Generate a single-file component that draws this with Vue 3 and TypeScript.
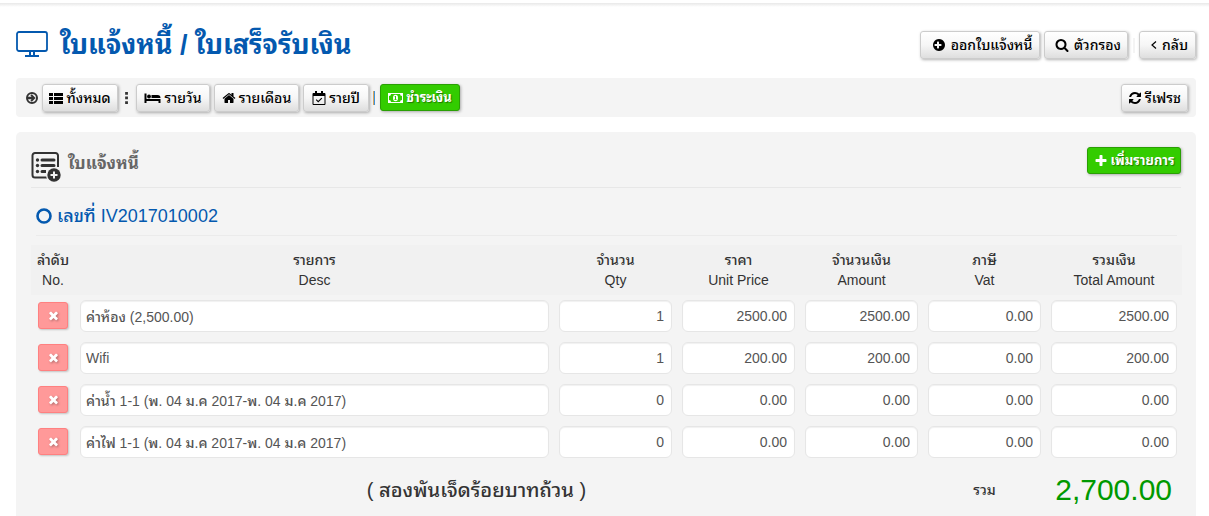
<script setup lang="ts">
import { ref } from 'vue'

interface InvoiceLine {
  desc: string
  qty: string
  price: string
  amount: string
  vat: string
  total: string
}

interface Column {
  key: string
  th: string
  en: string
}

const columns: Column[] = [
  { key: 'no', th: 'ลำดับ', en: 'No.' },
  { key: 'desc', th: 'รายการ', en: 'Desc' },
  { key: 'qty', th: 'จำนวน', en: 'Qty' },
  { key: 'price', th: 'ราคา', en: 'Unit Price' },
  { key: 'amount', th: 'จำนวนเงิน', en: 'Amount' },
  { key: 'vat', th: 'ภาษี', en: 'Vat' },
  { key: 'total', th: 'รวมเงิน', en: 'Total Amount' },
]

const numeric = ['qty', 'price', 'amount', 'vat', 'total'] as const

const lines = ref<InvoiceLine[]>([
  { desc: 'ค่าห้อง (2,500.00)', qty: '1', price: '2500.00', amount: '2500.00', vat: '0.00', total: '2500.00' },
  { desc: 'Wifi', qty: '1', price: '200.00', amount: '200.00', vat: '0.00', total: '200.00' },
  { desc: 'ค่าน้ำ 1-1 (พ. 04 ม.ค 2017-พ. 04 ม.ค 2017)', qty: '0', price: '0.00', amount: '0.00', vat: '0.00', total: '0.00' },
  { desc: 'ค่าไฟ 1-1 (พ. 04 ม.ค 2017-พ. 04 ม.ค 2017)', qty: '0', price: '0.00', amount: '0.00', vat: '0.00', total: '0.00' },
])

function addLine() {
  lines.value.push({ desc: '', qty: '0', price: '0.00', amount: '0.00', vat: '0.00', total: '0.00' })
}

function removeLine(index: number) {
  lines.value.splice(index, 1)
}
</script>

<template>
  <div class="page">
    <header class="head">
      <h1 class="title">
        <svg class="screen" viewBox="0 0 32 27" aria-hidden="true">
          <rect x="1" y="1" width="30" height="19" rx="2" fill="none" stroke="currentColor" stroke-width="1.800" />
          <path d="M13 20h6v4h-6zM9 24h14v2H9z" fill="currentColor" />
          <path d="M15 21h2v3h-2z" fill="#fff" />
        </svg>
        <span>ใบแจ้งหนี้ / ใบเสร็จรับเงิน</span>
      </h1>
      <div class="actions">
        <button type="button" class="btn wide issue">
          <svg class="ico" viewBox="0 0 1792 1792" aria-hidden="true"><path d="M1216 960v-128q0-26-19-45t-45-19h-256v-256q0-26-19-45t-45-19h-128q-26 0-45 19t-19 45v256h-256q-26 0-45 19t-19 45v128q0 26 19 45t45 19h256v256q0 26 19 45t45 19h128q26 0 45-19t19-45v-256h256q26 0 45-19t19-45zm448-64q0 209-103 385.500t-279.500 279.500-385.500 103-385.500-103-279.500-279.500-103-385.500 103-385.500 279.500-279.500 385.500-103 385.500 103 279.500 279.500 103 385.500z" /></svg>
          ออกใบแจ้งหนี้
        </button>
        <button type="button" class="btn wide filter">
          <svg class="ico" viewBox="0 0 1792 1792" aria-hidden="true"><path d="M1216 832q0-185-131.500-316.500t-316.500-131.500-316.500 131.500-131.500 316.500 131.500 316.500 316.500 131.500 316.500-131.500 131.500-316.500zm512 832q0 52-38 90t-90 38q-54 0-90-38l-343-342q-179 124-399 124-143 0-273.500-55.500t-225-150-150-225-55.500-273.500 55.500-273.500 150-225 225-150 273.500-55.500 273.500 55.500 225 150 150 225 55.500 273.500q0 220-124 399l343 343q37 37 37 90z" /></svg>
          ตัวกรอง
        </button>
        <span class="divider"></span>
        <button type="button" class="btn wide back">
          <svg class="chev" viewBox="0 0 6 10" aria-hidden="true"><path d="M5 1.500L1 5l4 3.500" fill="none" stroke="currentColor" stroke-width="1.200" /></svg>
          กลับ
        </button>
      </div>
    </header>

    <nav class="toolbar">
      <svg class="ico arrow" viewBox="0 0 14 14" aria-hidden="true">
        <circle cx="7" cy="7" r="5" fill="none" stroke="currentColor" stroke-width="2" />
        <path d="M3 5.800h3.600L5.400 4.600 6.800 3.200 10.600 7l-3.800 3.800-1.400-1.400L6.600 8.200H3z" />
      </svg>
      <button type="button" class="btn all">
        <svg class="ico" viewBox="0 0 14 14" aria-hidden="true"><path d="M0 2h4v3H0zM5 2h9v3H5zM0 6h4v3H0zM5 6h9v3H5zM0 10h4v3H0zM5 10h9v3H5z" /></svg>
        ทั้งหมด
      </button>
      <svg class="dots" viewBox="0 0 4 14" aria-hidden="true"><path d="M0 1h3v3H0zM0 6h3v3H0zM0 11h3v3H0z" /></svg>
      <button type="button" class="btn day">
        <svg class="ico bed" viewBox="0 0 16 14" aria-hidden="true"><path d="M0 2.500h2V8h14v4h-2v-2H2v2H0zM7 4h6c2 0 3 1.200 3 3H7z" /><circle cx="4.500" cy="5.500" r="1.900" /></svg>
        รายวัน
      </button>
      <button type="button" class="btn month">
        <svg class="ico" viewBox="0 0 1792 1792" aria-hidden="true"><path d="M1472 992v480q0 26-19 45t-45 19h-384v-384h-256v384h-384q-26 0-45-19t-19-45v-480q0-1 .5-3t.5-3l575-474 575 474q1 2 1 6zm223-69l-62 74q-8 9-21 11h-3q-13 0-21-7l-692-577-692 577q-12 8-24 7-13-2-21-11l-62-74q-8-10-7-23.500t11-21.500l719-599q32-26 76-26t76 26l244 204v-195q0-14 9-23t23-9h192q14 0 23 9t9 23v408l219 182q10 8 11 21.500t-7 23.500z" /></svg>
        รายเดือน
      </button>
      <button type="button" class="btn year">
        <svg class="ico" viewBox="0 0 14 14" aria-hidden="true"><path d="M1.500 2h11c.5 0 1 .5 1 1v10c0 .5-.5 1-1 1h-11c-.5 0-1-.5-1-1V3c0-.5.5-1 1-1zm0 3v8h11V5z" fill-rule="evenodd" /><path d="M3 0h2v4H3zM9 0h2v4H9z" /><path d="M4.200 8.700l2 2 3.600-3.600" fill="none" stroke="currentColor" stroke-width="1.100" /></svg>
        รายปี
      </button>
      <span class="pipe"></span>
      <button type="button" class="btn green pay">
        <svg class="ico money" viewBox="0 0 15 10" aria-hidden="true"><path d="M0 0h15v10H0zM3 1A2 2 0 0 1 1 3v4a2 2 0 0 1 2 2h9a2 2 0 0 1 2-2V3a2 2 0 0 1-2-2z" fill-rule="evenodd" /><ellipse cx="7.500" cy="5" rx="2.500" ry="3.200" /><path d="M7 3h1v3.200h.6V7H6.400v-.8H7V4h-.6z" fill="#33cc00" /></svg>
        ชำระเงิน
      </button>
      <button type="button" class="btn refresh">
        <svg class="ico" viewBox="0 0 1792 1792" aria-hidden="true"><path d="M1639 1056q0 5-1 7-64 268-268 434.500t-478 166.500q-146 0-282.500-55t-243.500-157l-129 129q-19 19-45 19t-45-19-19-45v-448q0-26 19-45t45-19h448q26 0 45 19t19 45-19 45l-137 137q71 66 161 102t187 36q134 0 250-65t186-179q11-17 53-117 8-23 30-23h192q13 0 22.500 9.500t9.500 22.500zm25-800v448q0 26-19 45t-45 19h-448q-26 0-45-19t-19-45 19-45l138-138q-148-137-349-137-134 0-250 65t-186 179q-11 17-53 117-8 23-30 23h-199q-13 0-22.500-9.500t-9.500-22.500v-7q65-268 270-434.500t480-166.500q146 0 284 55.500t245 156.500l130-129q19-19 45-19t45 19 19 45z" /></svg>
        รีเฟรช
      </button>
    </nav>

    <main class="panel">
      <div class="panel-head">
        <svg class="form-ico" viewBox="0 0 30 30" aria-hidden="true">
          <path d="M17 25.500H4A2.500 2.500 0 0 1 1.500 23V3.500A2.500 2.500 0 0 1 4 1h20.500A2.500 2.500 0 0 1 27 3.500V15" fill="none" stroke="currentColor" stroke-width="2" />
          <path d="M11 6.500h12a1.500 1.500 0 0 1 0 3H11a1.500 1.500 0 0 1 0-3zM11 12h12a1.500 1.500 0 0 1 0 3H11a1.500 1.500 0 0 1 0-3zM11 18h4v3h-4a1.500 1.500 0 0 1 0-3z" />
          <circle cx="6.500" cy="8" r="1.700" /><circle cx="6.500" cy="13.500" r="1.700" /><circle cx="6.500" cy="19.500" r="1.700" />
          <circle cx="23" cy="23" r="8" fill="#f4f4f4" />
          <circle cx="23" cy="23" r="6.700" />
          <path d="M22 19.500h2V22h2.500v2H24v2.500h-2V24h-2.500v-2H22z" fill="#f4f4f4" />
        </svg>
        <h2>ใบแจ้งหนี้</h2>
        <button type="button" class="btn green add" @click="addLine">
          <svg class="ico" viewBox="0 0 1792 1792" aria-hidden="true"><path d="M1600 736v192q0 40-28 68t-68 28h-416v416q0 40-28 68t-68 28h-192q-40 0-68-28t-28-68v-416h-416q-40 0-68-28t-28-68v-192q0-40 28-68t68-28h416v-416q0-40 28-68t68-28h192q40 0 68 28t28 68v416h416q40 0 68 28t28 68z" /></svg>
          เพิ่มรายการ
        </button>
      </div>

      <h3 class="number">
        <svg class="ring" viewBox="0 0 16 16" aria-hidden="true"><circle cx="8" cy="8" r="6.500" fill="none" stroke="currentColor" stroke-width="2.600" /></svg>
        <span>เลขที่ IV2017010002</span>
      </h3>

      <table class="lines">
        <colgroup>
          <col v-for="c in columns" :key="c.key" :class="'col-' + c.key" />
        </colgroup>
        <thead>
          <tr>
            <th v-for="c in columns" :key="c.key" scope="col">{{ c.th }}<br />{{ c.en }}</th>
          </tr>
        </thead>
        <tbody>
          <tr v-for="(line, i) in lines" :key="i">
            <td class="del-cell">
              <button type="button" class="del" aria-label="ลบ" @click="removeLine(i)">
                <svg viewBox="0 0 1792 1792" aria-hidden="true"><path d="M1490 1322q0 40-28 68l-136 136q-28 28-68 28t-68-28l-294-294-294 294q-28 28-68 28t-68-28l-136-136q-28-28-28-68t28-68l294-294-294-294q-28-28-28-68t28-68l136-136q28-28 68-28t68 28l294 294 294-294q28-28 68-28t68 28l136 136q28 28 28 68t-28 68l-294 294 294 294q28 28 28 68z" /></svg>
              </button>
            </td>
            <td><input v-model="line.desc" type="text" aria-label="รายการ" /></td>
            <td v-for="k in numeric" :key="k">
              <input v-model="line[k]" type="text" class="num" :aria-label="k" />
            </td>
          </tr>
        </tbody>
        <tfoot>
          <tr>
            <td></td>
            <td colspan="4" class="words">( สองพันเจ็ดร้อยบาทถ้วน )</td>
            <td class="sum-label">รวม</td>
            <td class="sum">2,700.00</td>
          </tr>
        </tfoot>
      </table>
    </main>
  </div>
</template>

<style>
body {
  margin: 0;
  background: #fff;
}
</style>

<style scoped>
.page {
  padding: 3px 13px 0 16px;
  background: linear-gradient(#fff 3px, #e8e8e8 3px, #fff 7px) no-repeat;
  font-family: "Liberation Sans", "Noto Sans Thai Looped", "Noto Looped Thai", Loma, Garuda, Arial, sans-serif;
  font-size: 14px;
  font-weight: 500;
  line-height: 20px;
  color: #333;
}
.head {
  display: flex;
  justify-content: space-between;
  align-items: center;
  height: 75px;
}
.title {
  display: flex;
  align-items: center;
  gap: 12px;
  margin: 0;
  padding-top: 8px;
  font-size: 27px;
  line-height: 40px;
  font-weight: 700;
  color: #0459af;
  white-space: nowrap;
}
.screen {
  width: 32px;
  height: 27px;
}
.actions {
  display: flex;
  align-items: center;
  gap: 4px;
  padding-top: 9px;
}
.divider {
  width: 2px;
  height: 15px;
  margin-left: 1px;
  background: #f4f4f4;
}
.btn {
  box-sizing: border-box;
  display: inline-flex;
  align-items: center;
  justify-content: center;
  gap: 3px;
  height: 28px;
  padding: 0;
  border: 1px solid #ccc;
  border-radius: 3px;
  background: linear-gradient(#fff, #f6f6f6 50%, #dedede);
  box-shadow: 1px 1px 3px rgba(0, 0, 0, 0.3);
  color: #000;
  font: inherit;
  white-space: nowrap;
  cursor: pointer;
}
.wide {
  gap: 5px;
}
.issue { width: 120px; padding-left: 4px; }
.filter { width: 84px; padding-left: 4px; }
.back { width: 57px; padding-left: 4px; }
.all { width: 76px; }
.day { width: 74px; }
.month { width: 85px; }
.year { width: 66px; }
.pay { width: 80px; }
.refresh { width: 67px; margin-left: auto; }
.add { width: 94px; }
.ico {
  width: 14px;
  height: 14px;
  flex: none;
  fill: currentColor;
}
.chev {
  width: 6px;
  height: 10px;
}
.bed {
  width: 17px;
}
.money {
  width: 15px;
  height: 10px;
}
.green {
  height: 27px;
  border-color: #2a9f04;
  background: #33cc00;
  color: #fff;
  font-size: 13px;
  font-weight: 700;
  text-shadow: 1px 1px 1px rgba(0, 0, 0, 0.4);
}
.toolbar {
  display: flex;
  align-items: center;
  gap: 4px;
  height: 39px;
  padding: 0 8px 0 9px;
  border-radius: 4px;
  background: #f4f4f4;
}
.arrow {
  color: #333;
  margin-right: -1px;
}
.dots {
  width: 4px;
  height: 13px;
  margin: 0 3px;
  fill: #333;
}
.pipe {
  width: 2px;
  height: 14px;
  margin-right: 1px;
  background: linear-gradient(90deg, #d9a55f 50%, #3d94dc 50%);
}
.panel {
  margin-top: 15px;
  padding: 15px 14px 0 15px;
  border-radius: 5px 5px 0 0;
  background: #f4f4f4;
}
.panel-head {
  display: flex;
  align-items: flex-start;
  height: 40px;
  margin-right: 1px;
  border-bottom: 1px solid #e7e7e7;
}
.form-ico {
  width: 30px;
  height: 30px;
  margin-top: 5px;
  fill: currentColor;
}
h2 {
  flex: 1;
  margin: 3px 0 0 7px;
  font-size: 17px;
  line-height: 28px;
  font-weight: 700;
  color: #666;
}
.number {
  display: flex;
  align-items: center;
  gap: 5px;
  height: 39px;
  margin: 0 5px 9px;
  padding-top: 8px;
  border-bottom: 1px solid #ebebeb;
  font-size: 18px;
  line-height: 24px;
  font-weight: 500;
  color: #0459af;
}
.ring {
  width: 16px;
  height: 16px;
}
.lines {
  width: 100%;
  table-layout: fixed;
  border-collapse: collapse;
}
.col-no { width: 44px; }
.col-qty,
.col-price,
.col-amount,
.col-vat { width: 123px; }
.col-total { width: 136px; }
thead {
  background: #f1f1f1;
}
th {
  padding: 5px 0;
  font-weight: 500;
  text-align: center;
}
td {
  height: 32px;
  padding: 5px;
}
tbody input {
  box-sizing: border-box;
  display: block;
  width: 100%;
  height: 32px;
  padding: 0 7px 1px 5px;
  border: 1px solid #e6e6e6;
  border-radius: 6px;
  background: #fff;
  box-shadow: inset 0 1px 1px rgba(0, 0, 0, 0.06);
  color: #555;
  font: inherit;
}
tbody .num {
  text-align: right;
}
tbody .del-cell {
  height: 28px;
  padding: 7px;
  vertical-align: top;
}
.del {
  display: flex;
  align-items: center;
  justify-content: center;
  box-sizing: border-box;
  width: 30px;
  height: 27px;
  padding: 0;
  border: 1px solid #ff8080;
  border-radius: 3px;
  background: #ff9999;
  box-shadow: 1px 1px 2px rgba(0, 0, 0, 0.2);
  cursor: pointer;
}
.del svg {
  width: 13px;
  height: 13px;
  fill: #fff;
  filter: drop-shadow(1px 1px 1px rgba(0, 0, 0, 0.3));
}
tfoot td {
  height: 43px;
}
tfoot .words {
  padding: 5px 50px 5px 5px;
  font-size: 20px;
  text-align: center;
}
.sum-label {
  text-align: center;
}
tfoot .sum {
  padding-right: 10px;
  color: #009900;
  font-size: 30px;
  text-align: right;
}
</style>
